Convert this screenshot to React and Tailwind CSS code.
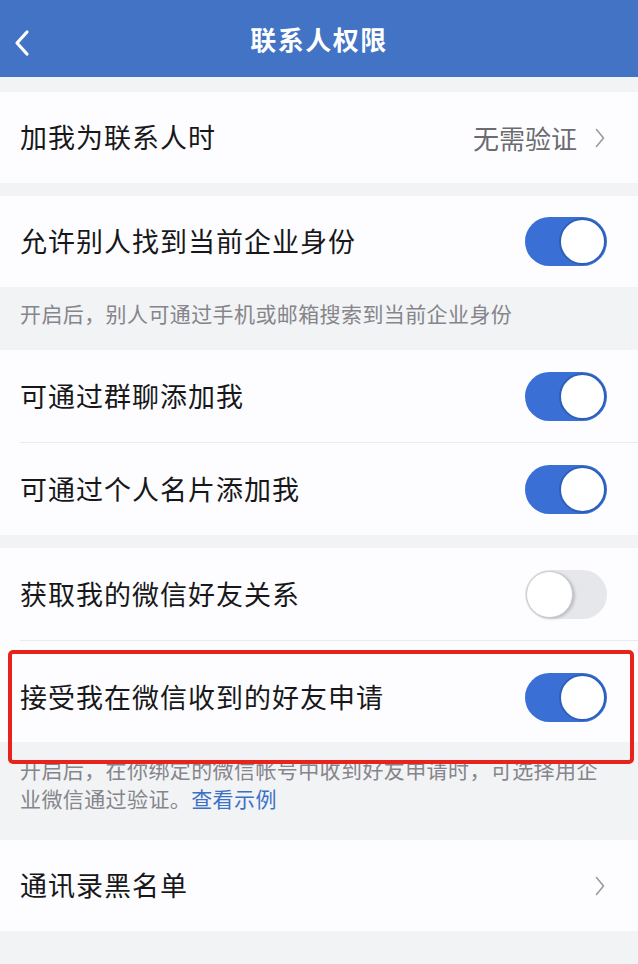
import React from "react";

const font = { fontFamily: '"Noto Sans CJK SC", "Noto Sans", sans-serif' };

function Toggle({ on }) {
  return on ? (
    <div className="flex h-[49px] w-[82px] items-center justify-end rounded-full bg-[#3a70d6] p-[1px]">
      <div className="h-[47px] w-[47px] rounded-full border-2 border-[#2d5fb8] bg-white" />
    </div>
  ) : (
    <div className="flex h-[49px] w-[82px] items-center justify-start rounded-full bg-[#e6e7ea] p-[1px]">
      <div className="h-[47px] w-[47px] rounded-full border border-[#c9cbd0] bg-white shadow-[2px_1px_3px_rgba(0,0,0,0.18)]" />
    </div>
  );
}

function Chevron() {
  return (
    <svg width="10" height="20" viewBox="0 0 10 20" className="ml-[18px]">
      <path d="M1.5 1.5 L8.5 10 L1.5 18.5" fill="none" stroke="#9a9aa0" strokeWidth="1.6" strokeLinecap="round" strokeLinejoin="round" />
    </svg>
  );
}

function Row({ label, right, divider, tall }) {
  return (
    <div className="relative">
      {divider && <div className="ml-[20px] h-px bg-[#e9eaed]" />}
      <div className={`flex items-center justify-between pl-[20px] pr-[31px] ${tall ? "h-[92px]" : "h-[91px]"}`}>
        <span className="text-[27px] tracking-[1px] text-[#18181a]">{label}</span>
        {right}
      </div>
    </div>
  );
}

export default function App() {
  return (
    <div className="min-h-[964px] w-[638px] bg-[#f2f3f5]" style={font}>
      {/* navigation bar */}
      <div className="relative flex h-[77px] items-center justify-center bg-[#4373c4]">
        <svg width="20" height="28" viewBox="0 0 20 28" className="absolute left-[12px] top-[29px]">
          <path d="M15 3 L5 14 L15 25" fill="none" stroke="#ffffff" strokeWidth="3.2" strokeLinecap="round" strokeLinejoin="round" />
        </svg>
        <span className="text-[26px] font-bold tracking-[1.5px] text-white">联系人权限</span>
      </div>

      <div className="h-[15px]" />
      <div className="bg-[#fdfdff]">
        <Row
          label="加我为联系人时"
          right={
            <div className="mr-[2px] flex items-center">
              <span className="text-[26px] text-[#6b6b70]">无需验证</span>
              <Chevron />
            </div>
          }
        />
      </div>

      <div className="h-[13px]" />
      <div className="bg-[#fdfdff]">
        <Row label="允许别人找到当前企业身份" right={<Toggle on />} />
      </div>
      <div className="px-[20px] pb-[22px] pt-[12px] text-[21px] leading-[29px] tracking-[0.4px] text-[#85858b]">
        开启后，别人可通过手机或邮箱搜索到当前企业身份
      </div>

      <div className="bg-[#fdfdff]">
        <Row label="可通过群聊添加我" right={<Toggle on />} tall />
        <Row label="可通过个人名片添加我" right={<Toggle on />} divider tall />
      </div>

      <div className="h-[13px]" />
      <div className="bg-[#fdfdff]">
        <Row label="获取我的微信好友关系" right={<Toggle on={false} />} tall />
        <div className="relative">
          <div className="ml-[20px] h-px bg-[#e9eaed]" />
          <div className="flex h-[101px] items-center justify-between pl-[20px] pr-[31px] pt-[12px]">
            <span className="text-[27px] tracking-[1px] text-[#18181a]">接受我在微信收到的好友申请</span>
            <Toggle on />
          </div>
          {/* highlight frame */}
          <div className="pointer-events-none absolute bottom-[-22px] left-[8px] right-[4px] top-[10px] z-10 rounded-[5px] border-[4px] border-[#e8231c]" />
        </div>
      </div>
      <div className="px-[20px] pb-[27px] pt-[13px] text-[21px] leading-[29px] tracking-[0.4px] text-[#85858b]">
        开启后，在你绑定的微信帐号中收到好友申请时，可选择用企
        <br />
        业微信通过验证。<span className="text-[#3b72c6]">查看示例</span>
      </div>

      <div className="bg-[#fdfdff]">
        <Row
          label="通讯录黑名单"
          right={
            <div className="mr-[2px] flex items-center">
              <Chevron />
            </div>
          }
        />
      </div>
    </div>
  );
}
